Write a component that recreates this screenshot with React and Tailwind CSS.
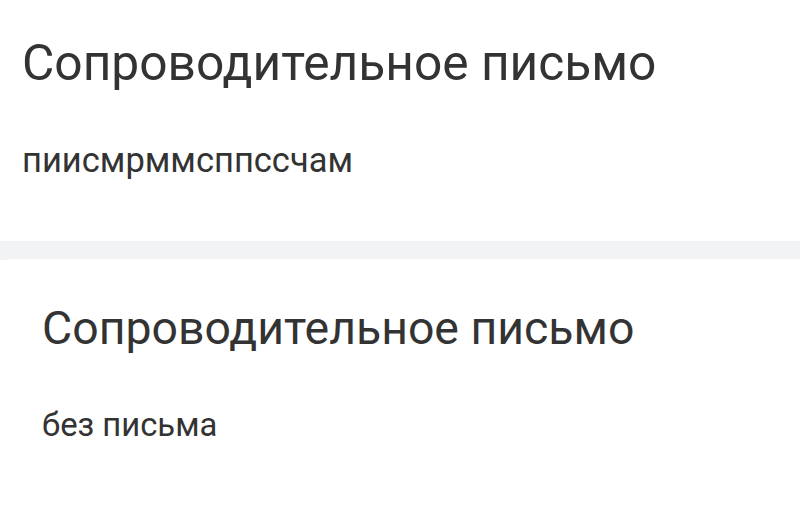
export default function App() {
  return (
    <div className="w-full h-[507px] bg-white text-[#333333] overflow-hidden" style={{ fontFamily: "Roboto, 'Noto Sans', sans-serif" }}>
      <section className="pl-[22px] pt-[33px] h-[241px]">
        <h1 className="text-[49.7px] leading-[60px] font-normal">Сопроводительное письмо</h1>
        <p className="mt-[45px] text-[34.5px] leading-[44px]">пиисмрммсппссчам</p>
      </section>
      <div className="h-[19px] bg-[#f1f3f5]" />
      <section className="bg-white rounded-tl-[10px] pl-[42px] pt-[41px] -mt-px">
        <h2 className="text-[46.4px] leading-[56px] font-normal">Сопроводительное письмо</h2>
        <p className="mt-[49px] text-[32.8px] leading-[40px]">без письма</p>
      </section>
    </div>
  );
}
